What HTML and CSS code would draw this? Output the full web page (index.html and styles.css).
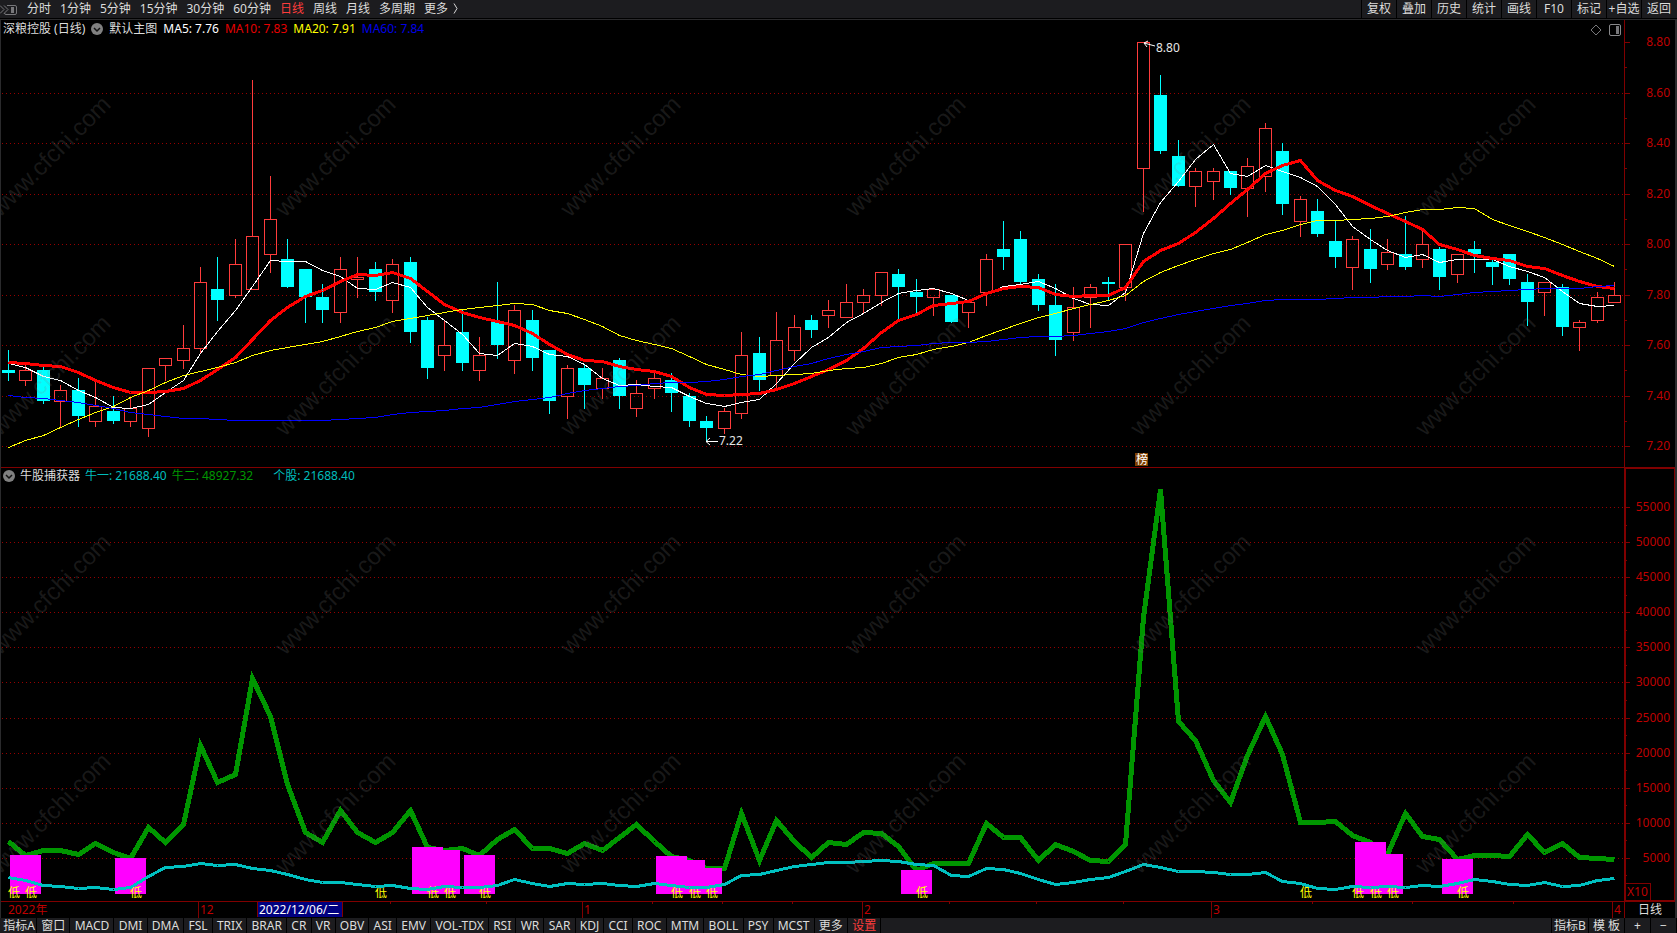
FILE: index.html
```html
<!DOCTYPE html>
<html lang="zh-CN">
<head>
  <meta charset="UTF-8">
  <meta name="viewport" content="width=device-width, initial-scale=1.0">
  <title>深粮控股 日线</title>
  <link rel="stylesheet" href="styles.css">
</head>
<body>
  <header class="toolbar">
    <button class="side-toggle" aria-label="侧栏">
      <svg width="18" height="12" viewBox="0 0 18 12" fill="none" stroke="#77777a">
        <path d="M0 1.5 L4 5.5 L0 9.5 M4 1.5 L8 5.5 L4 9.5"/>
        <path d="M7 1.5 H15 Q16.500 1.500 16.500 3 V9 Q16.500 10.500 15 10.500 H6 Q4.500 10.500 4.500 9"/>
        <rect x="11" y="3" width="3" height="6" fill="#77777a" stroke="none"/>
      </svg>
    </button>
    <nav class="periods">
      <button>分时</button>
      <button>1分钟</button>
      <button>5分钟</button>
      <button>15分钟</button>
      <button>30分钟</button>
      <button>60分钟</button>
      <button class="active">日线</button>
      <button>周线</button>
      <button>月线</button>
      <button>多周期</button>
      <button>更多 <svg width="5" height="11" viewBox="0 0 5 11" fill="none" stroke="#d8d8d8"><path d="M1 0.500 L4 5.500 L1 10.500"/></svg></button>
    </nav>
    <div class="tools">
      <button>复权</button>
      <button>叠加</button>
      <button>历史</button>
      <button>统计</button>
      <button>画线</button>
      <button>F10</button>
      <button>标记</button>
      <button>+自选</button>
      <button>返回</button>
    </div>
  </header>

  <main class="workspace">
    <section class="panel panel-main">
      <div class="plot">
        <svg id="main-plot"></svg>
        <div class="legend">
          <span>深粮控股 (日线)</span>
          <svg class="fold" width="12" height="12" viewBox="0 0 12 12"><circle cx="6" cy="6" r="6" fill="#808080"/><path d="M3 5 L6 8 L9 5" fill="none" stroke="#111" stroke-width="1.500"/></svg>
          <span>默认主图</span>
          <span class="c-white">MA5: 7.76</span>
          <span class="c-red">MA10: 7.83</span>
          <span class="c-yellow">MA20: 7.91</span>
          <span class="c-blue">MA60: 7.84</span>
        </div>
        <div class="plot-tools">
          <svg width="12" height="12" viewBox="0 0 12 12" fill="none" stroke="#77777a"><path d="M6 1 L11 6 L6 11 L1 6 Z"/></svg>
          <svg width="12" height="12" viewBox="0 0 12 12"><rect x="0.500" y="0.500" width="11" height="11" rx="1.500" fill="none" stroke="#88888a"/><rect x="7" y="2" width="3" height="8" fill="#77777a"/></svg>
        </div>
      </div>
      <div class="axis axis-main"><svg id="main-axis"></svg></div>
    </section>

    <section class="panel panel-sub">
      <div class="plot">
        <svg id="sub-plot"></svg>
        <div class="legend">
          <svg class="fold" width="12" height="12" viewBox="0 0 12 12"><circle cx="6" cy="6" r="6" fill="#808080"/><path d="M3 5 L6 8 L9 5" fill="none" stroke="#111" stroke-width="1.500"/></svg>
          <span>牛股捕获器</span>
          <span class="c-cyan">牛一: 21688.40</span>
          <span class="c-green">牛二: 48927.32</span>
          <span class="c-cyan stock">个股: 21688.40</span>
        </div>
      </div>
      <div class="axis axis-sub"><svg id="sub-axis"></svg><span class="unit">X10</span></div>
    </section>

    <div class="timeline">
      <svg id="time-axis"></svg>
      <button class="period-name">日线</button>
    </div>

    <svg id="watermark" class="watermark" aria-hidden="true"></svg>
  </main>

  <footer class="indicators">
    <nav class="indicator-list">
      <button>指标A</button>
      <button>窗口</button>
      <button>MACD</button>
      <button>DMI</button>
      <button>DMA</button>
      <button>FSL</button>
      <button>TRIX</button>
      <button>BRAR</button>
      <button>CR</button>
      <button>VR</button>
      <button>OBV</button>
      <button>ASI</button>
      <button>EMV</button>
      <button>VOL-TDX</button>
      <button>RSI</button>
      <button>WR</button>
      <button>SAR</button>
      <button>KDJ</button>
      <button>CCI</button>
      <button>ROC</button>
      <button>MTM</button>
      <button>BOLL</button>
      <button>PSY</button>
      <button>MCST</button>
      <button>更多</button>
      <button class="active">设置</button>
    </nav>
    <div class="templates">
      <button>指标B</button>
      <button>模 板</button>
      <button class="zoom">+</button>
      <button class="zoom">−</button>
    </div>
  </footer>

  <script src="chart.js"></script>
</body>
</html>
```

FILE: styles.css
```css
:root {
  --bar: #1c1c1f;
  --text: #dcdcdc;
  --up: #ff3c3c;
  --down: #00ffff;
  --frame: #800000;
  --label: #be0000;
}

* {
  margin: 0;
  padding: 0;
  box-sizing: border-box;
}

body {
  display: flex;
  flex-direction: column;
  height: 100vh;
  overflow: hidden;
  background: #000;
  color: var(--text);
  font-family: "Noto Sans", "Noto Sans CJK SC", sans-serif;
  font-size: 12px;
  line-height: 16px;
}

button {
  border: none;
  background: none;
  color: inherit;
  font: inherit;
  white-space: nowrap;
  cursor: pointer;
}

svg {
  display: block;
}

.active {
  color: var(--up);
}

/* top toolbar */
.toolbar {
  display: flex;
  align-items: stretch;
  height: 18px;
  margin-bottom: 1px;
  background: var(--bar);
}

.side-toggle {
  width: 27px;
  padding-top: 1px;
}

.periods {
  display: flex;
  flex: 1;
  gap: 9px;
}

.periods svg {
  display: inline-block;
  vertical-align: -1px;
  margin-left: 2px;
}

.tools {
  display: flex;
  padding-right: 1px;
}

.tools button {
  width: 35px;
  border-left: 1px solid #000;
}

/* charts */
.workspace {
  position: relative;
  display: flex;
  flex: 1;
  flex-direction: column;
  min-height: 0;
  border: solid #2a2a2c;
  border-width: 1px 2px 0 1px;
}

.panel {
  display: flex;
  min-height: 0;
}

.panel-main {
  flex: 448 1 0;
}

.panel-sub {
  flex: 434 1 0;
}

.plot {
  position: relative;
  flex: 1;
  min-width: 0;
  border-bottom: 1px solid var(--frame);
}

.plot > svg:first-child,
.axis > svg {
  width: 100%;
  height: 100%;
}

.axis {
  position: relative;
  width: 51px;
}

.axis-main {
  border-left: 1px solid var(--frame);
  border-bottom: 1px solid var(--frame);
}

.axis-sub {
  border: solid var(--frame);
  border-width: 1px 1px 2px 2px;
}

.axis text,
.timeline text {
  fill: var(--label);
}

.unit {
  position: absolute;
  left: 0;
  bottom: 0;
  width: 25px;
  padding-left: 1px;
  border: solid var(--frame);
  border-width: 1px 1px 0 0;
  color: var(--label);
}

.legend {
  position: absolute;
  top: 0;
  left: 2px;
  display: flex;
  align-items: center;
  gap: 5px;
}

.panel-main .legend {
  top: 1px;
  gap: 6px;
}

.c-white { color: #fff; }
.c-red { color: #e60000; }
.c-yellow { color: #ff0; }
.c-blue { color: #0000e6; }
.c-cyan { color: #00bcbc; }
.c-green { color: #009600; }

.stock {
  margin-left: 15px;
}

.plot-tools {
  position: absolute;
  top: 4px;
  right: 3px;
  display: flex;
  gap: 7px;
}

.watermark {
  position: absolute;
  inset: 0;
  width: 100%;
  height: 100%;
  pointer-events: none;
  font-family: "Liberation Sans", Arial, sans-serif;
  font-size: 24px;
  fill: rgba(128, 128, 128, 0.2);
}

/* date axis */
.timeline {
  display: flex;
  height: 16px;
}

.timeline svg {
  flex: 1;
  min-width: 0;
  height: 16px;
}

.period-name {
  width: 51px;
  border-left: 1px solid var(--frame);
}

/* svg parts */
.grid {
  stroke: #960000;
  stroke-dasharray: 1 3;
}

.frame-line {
  stroke: var(--frame);
}

.up {
  stroke: var(--up);
  fill: none;
}

.down {
  stroke: none;
  fill: var(--down);
}

.line {
  fill: none;
}

.signal-bar {
  fill: #f0f;
}

.signal-text {
  fill: #ff0;
}

.note {
  fill: #e6e6e6;
}

.arrow {
  fill: none;
  stroke: #fff;
}

/* bottom bar */
.indicators {
  display: flex;
  justify-content: space-between;
  height: 15px;
  padding-left: 2px;
  background: var(--bar);
  line-height: 16px;
}

.indicators button {
  padding: 0 4px;
  border-right: 1px solid #000;
}

.indicator-list {
  display: flex;
  flex: 0 0 52.5%;
}

.indicator-list button {
  flex: 1 0 auto;
}

.indicator-list button:first-child {
  padding: 0 1px;
}

.templates {
  display: flex;
  border-left: 1px solid #000;
}

.templates button:first-child {
  padding: 0 2px;
}

.indicators .zoom {
  width: 26px;
}
```

FILE: chart.js
```js
// [open, high, low, close], one row per trading day
const candles = [
  [7.50,7.58,7.46,7.49],[7.46,7.52,7.44,7.50],[7.50,7.52,7.37,7.38],[7.38,7.44,7.28,7.42],
  [7.42,7.47,7.28,7.32],[7.30,7.46,7.28,7.36],[7.34,7.40,7.29,7.30],[7.30,7.39,7.28,7.35],
  [7.27,7.51,7.24,7.51],[7.52,7.55,7.46,7.55],[7.54,7.68,7.51,7.59],[7.59,7.91,7.57,7.85],
  [7.82,7.95,7.70,7.78],[7.80,8.02,7.79,7.92],[7.82,8.65,7.82,8.03],[7.96,8.27,7.89,8.10],
  [7.94,8.02,7.83,7.83],[7.90,7.90,7.69,7.79],[7.79,7.84,7.69,7.74],[7.73,7.95,7.69,7.90],
  [7.86,7.95,7.79,7.87],[7.90,7.93,7.78,7.81],[7.78,7.94,7.73,7.92],[7.93,7.95,7.61,7.65],
  [7.70,7.71,7.47,7.51],[7.56,7.70,7.50,7.60],[7.65,7.74,7.50,7.53],[7.50,7.63,7.46,7.56],
  [7.69,7.85,7.55,7.60],[7.54,7.76,7.49,7.74],[7.70,7.74,7.50,7.55],[7.58,7.58,7.33,7.38],
  [7.40,7.52,7.31,7.51],[7.51,7.52,7.35,7.44],[7.43,7.51,7.39,7.47],[7.54,7.55,7.35,7.40],
  [7.35,7.46,7.32,7.41],[7.43,7.49,7.39,7.47],[7.46,7.49,7.34,7.41],[7.40,7.41,7.28,7.30],
  [7.30,7.32,7.22,7.27],[7.27,7.35,7.25,7.34],[7.33,7.65,7.31,7.56],[7.57,7.63,7.42,7.46],
  [7.48,7.73,7.42,7.62],[7.58,7.72,7.54,7.67],[7.70,7.72,7.63,7.66],[7.72,7.78,7.67,7.74],
  [7.71,7.84,7.71,7.77],[7.77,7.82,7.73,7.80],[7.80,7.89,7.76,7.89],[7.88,7.90,7.70,7.83],
  [7.81,7.86,7.73,7.79],[7.79,7.82,7.72,7.82],[7.80,7.80,7.69,7.69],[7.73,7.78,7.67,7.77],
  [7.81,7.96,7.76,7.94],[7.98,8.09,7.90,7.95],[8.02,8.05,7.84,7.85],[7.86,7.88,7.74,7.76],
  [7.76,7.84,7.56,7.62],[7.65,7.83,7.62,7.75],[7.79,7.84,7.67,7.83],[7.85,7.87,7.78,7.84],
  [7.83,8.00,7.78,8.00],[8.30,8.80,8.13,8.80],[8.59,8.67,8.36,8.37],[8.35,8.41,8.23,8.23],
  [8.23,8.30,8.15,8.29],[8.25,8.30,8.18,8.29],[8.29,8.29,8.20,8.22],[8.22,8.34,8.11,8.31],
  [8.27,8.48,8.21,8.46],[8.37,8.40,8.12,8.16],[8.09,8.19,8.03,8.18],[8.13,8.18,8.03,8.04],
  [8.01,8.09,7.91,7.95],[7.91,8.03,7.82,8.02],[7.98,8.06,7.85,7.90],[7.92,8.02,7.90,7.97],
  [7.96,8.11,7.90,7.91],[7.94,8.06,7.91,8.00],[7.98,7.99,7.82,7.87],[7.88,7.96,7.85,7.96],
  [7.98,8.01,7.89,7.96],[7.93,7.94,7.84,7.91],[7.96,7.96,7.84,7.86],[7.85,7.88,7.68,7.77],
  [7.81,7.85,7.72,7.85],[7.83,7.84,7.64,7.67],[7.67,7.70,7.58,7.69],[7.70,7.81,7.69,7.79],
  [7.77,7.85,7.77,7.80]
];

// averages for the days whose window starts before the first candle
const maSeeds = {
  5: [7.527,7.511,7.476,7.46],
  10: [7.531,7.53,7.52,7.516,7.495,7.461,7.433,7.415,7.413],
  20: [7.196,7.223,7.242,7.275,7.306,7.334,7.358,7.394,7.423,7.453,7.481,7.497,7.514,7.532,7.561,7.58,7.592,7.603,7.615],
  60: [7.402,7.394,7.39,7.382,7.374,7.361,7.351,7.334,7.326,7.318,7.311,7.309,7.307,7.303,7.302,7.302,7.302,7.302,7.302,7.306,
       7.309,7.314,7.326,7.334,7.338,7.343,7.35,7.355,7.366,7.378,7.387,7.396,7.408,7.421,7.428,7.436,7.442,7.449,7.453,7.453,
       7.457,7.465,7.477,7.486,7.502,7.518,7.53,7.547,7.564,7.576,7.591,7.595,7.6,7.607,7.61,7.612,7.616,7.624,7.632]
};

// indicator values, in tens
const bull2 = [7381,5381,6190,6150,5619,7143,5857,4950,9380,7240,9857,21048,15857,17000,30667,25286,15476,8762,7333,11857,
  8714,7333,8762,11857,6571,6095,6381,5476,7762,9095,6476,6429,5667,7143,6143,8048,9857,7430,5333,4762,
  3571,3524,11429,4762,10429,7429,5190,7238,7048,8667,8619,6667,3333,4333,4333,4333,10000,8048,8048,4714,
  6952,5950,4762,4619,7048,39300,57500,24571,21810,16143,12905,19700,25286,19762,10095,10095,10238,10238,7333,5619,
  11381,8095,7714,4905,5430,5476,5330,8429,5905,7190,5095,5048,4893];
bull2[77] = 8333;

const bull1 = [2286,1810,1143,952,714,857,571,857,2381,3667,3857,4286,4000,4143,3571,3286,2714,2050,1571,1571,
  1286,1000,1143,714,571,952,857,857,1143,2000,1429,952,1380,1286,1381,1143,1000,1381,1190,857,
  905,1286,2524,2714,3333,3857,4143,4429,4429,4619,4762,4571,4143,4048,2619,2429,3571,3429,2857,2000,
  1286,1571,2000,2333,3190,4143,3714,3190,3190,3000,2714,2714,3000,1762,1429,762,571,1000,857,1000,
  857,1143,1000,1429,2000,1714,1286,1095,1571,1000,1190,1857,2169];

const barDays = [1, 7, 24, 25, 27, 38, 39, 40, 52, 78, 79, 83];
const lowDays = [0, 1, 7, 21, 24, 25, 27, 38, 39, 40, 52, 74, 77, 78, 79, 83];

const months = [[10.9, '12'], [32.9, '1'], [48.9, '2'], [68.9, '3'], [91.9, '4']];
const weeks = [21.9, 27.4, 36.9, 40.9, 44.9, 53.9, 58.9, 63.9, 74.7, 80.4, 86.2];

const get = id => document.getElementById(id);

function add(svg, tag, attrs, text) {
  const el = document.createElementNS('http://www.w3.org/2000/svg', tag);
  for (const key in attrs) el.setAttribute(key, attrs[key]);
  if (text !== undefined) el.textContent = text;
  svg.appendChild(el);
  return el;
}

function hline(svg, x1, x2, y, cls) {
  add(svg, 'line', { x1, x2, y1: y + 0.5, y2: y + 0.5, class: cls });
}

function vline(svg, x, y1, y2, cls) {
  add(svg, 'line', { x1: x + 0.5, x2: x + 0.5, y1, y2, class: cls });
}

function movingAverage(n) {
  return candles.map((c, i) => {
    if (i < n - 1) return maSeeds[n][i];
    let sum = 0;
    for (let k = i - n + 1; k <= i; k++) sum += candles[k][3];
    return sum / n;
  });
}

function drawLine(svg, values, x, y, color, width) {
  const points = values.map((v, i) => (x(i) + 0.5) + ',' + (y(v) + 0.5)).join(' ');
  add(svg, 'polyline', {
    points, stroke: color, 'stroke-width': width, class: 'line', 'shape-rendering': 'crispEdges'
  });
}

function scaleX(width) {
  return i => Math.round(7 + i * (width - 17) / (candles.length - 1));
}

function drawMain() {
  const svg = get('main-plot');
  const axis = get('main-axis');
  svg.innerHTML = axis.innerHTML = '';
  const w = svg.clientWidth;
  const h = svg.clientHeight;
  const x = scaleX(w);
  const y = p => Math.round(22 + (8.8 - p) * (h - 43) / 1.6);

  for (let p = 88; p >= 72; p--) {
    const py = y(p / 10);
    if (p % 2 === 0) {
      if (p < 88) hline(svg, 1, w, py, 'grid');
      hline(axis, 0, 5, py, 'frame-line');
      add(axis, 'text', { x: 45, y: py + 4, 'text-anchor': 'end' }, (p / 10).toFixed(2));
    } else {
      hline(axis, 0, 2, py, 'frame-line');
    }
  }

  candles.forEach(([open, high, low, close], i) => {
    const cx = x(i);
    const top = y(Math.max(open, close));
    const bottom = y(Math.min(open, close));
    if (close >= open) {
      vline(svg, cx, y(high), top, 'up');
      vline(svg, cx, bottom + 1, y(low) + 1, 'up');
      add(svg, 'rect', { x: cx - 5.5, y: top + 0.5, width: 12, height: bottom - top, class: 'up' });
    } else {
      add(svg, 'rect', { x: cx, y: y(high), width: 1, height: y(low) - y(high) + 1, class: 'down' });
      add(svg, 'rect', { x: cx - 6, y: top, width: 13, height: Math.max(2, bottom - top), class: 'down' });
    }
  });

  drawLine(svg, movingAverage(5), x, y, '#ffffff', 1);
  drawLine(svg, movingAverage(10), x, y, '#ff0000', 3);
  drawLine(svg, movingAverage(20), x, y, '#ffff00', 1);
  drawLine(svg, movingAverage(60), x, y, '#0000ff', 1);

  // highest and lowest price notes
  const hx = x(65), hy = y(8.8);
  add(svg, 'path', { d: `M${hx + 12} ${hy + 4} L${hx + 1} ${hy + 1} M${hx + 5} ${hy - 1} L${hx + 1} ${hy + 1} L${hx + 4} ${hy + 5}`, class: 'arrow' });
  add(svg, 'text', { x: hx + 13, y: hy + 10, class: 'note' }, '8.80');
  const lx = x(40), ly = y(7.22);
  add(svg, 'path', { d: `M${lx + 12} ${ly + 0.5} H${lx} M${lx + 4} ${ly - 3} L${lx} ${ly + 0.5} L${lx + 4} ${ly + 4}`, class: 'arrow' });
  add(svg, 'text', { x: lx + 13, y: ly + 4, class: 'note' }, '7.22');

  add(svg, 'rect', { x: hx - 8, y: h - 14, width: 13, height: 13, fill: '#804000' });
  add(svg, 'text', { x: hx - 7, y: h - 3, fill: '#fff' }, '榜');
}

function drawSub() {
  const svg = get('sub-plot');
  const axis = get('sub-axis');
  svg.innerHTML = axis.innerHTML = '';
  const w = svg.clientWidth;
  const h = svg.clientHeight;
  const x = scaleX(w);
  const y = v => Math.round(h - 8 - v * (h - 47) / 55000);

  for (let v = 5000; v <= 55000; v += 5000) {
    hline(svg, 1, w, y(v), 'grid');
    hline(axis, 0, 4, y(v) - 1, 'frame-line');
    hline(axis, 0, 1, y(v - 2500) - 1, 'frame-line');
    add(axis, 'text', { x: 44, y: y(v) + 3, 'text-anchor': 'end' }, v);
  }

  drawLine(svg, bull2, x, y, '#009600', 5);
  barDays.forEach(i => {
    const top = y(bull2[i]);
    add(svg, 'rect', { x: x(i) - 15, y: top, width: 31, height: h - 7 - top, class: 'signal-bar' });
  });
  lowDays.forEach(i => add(svg, 'text', { x: x(i), y: h - 4, class: 'signal-text' }, '低'));
  drawLine(svg, bull1, x, y, '#00c0c0', 3);
}

function drawTime() {
  const svg = get('time-axis');
  svg.innerHTML = '';
  const x = scaleX(svg.clientWidth);
  add(svg, 'text', { x: 7, y: 12 }, '2022年');
  months.forEach(([i, name]) => {
    vline(svg, x(i), 0, 16, 'frame-line');
    add(svg, 'text', { x: x(i) + 2, y: 12 }, name);
  });
  weeks.forEach(i => vline(svg, x(i), 0, 2, 'frame-line'));

  const dx = x(14) + 6;
  add(svg, 'rect', { x: dx, y: 0, width: 84, height: 15, fill: '#000080' });
  vline(svg, dx - 1, 0, 15, 'frame-line');
  vline(svg, dx + 84, 0, 15, 'frame-line');
  const date = add(svg, 'text', { x: dx + 1, y: 12 }, '2022/12/06/二');
  date.style.fill = '#fff';
}

function drawWatermark() {
  const svg = get('watermark');
  svg.innerHTML = '';
  for (let ty = 198; ty < svg.clientHeight; ty += 219) {
    for (let tx = -1; tx < svg.clientWidth - 100; tx += 285) {
      add(svg, 'text', { transform: `translate(${tx} ${ty}) rotate(-45)` }, 'www.cfchi.com');
    }
  }
}

function draw() {
  drawMain();
  drawSub();
  drawTime();
  drawWatermark();
}

draw();
window.addEventListener('resize', draw);
```
